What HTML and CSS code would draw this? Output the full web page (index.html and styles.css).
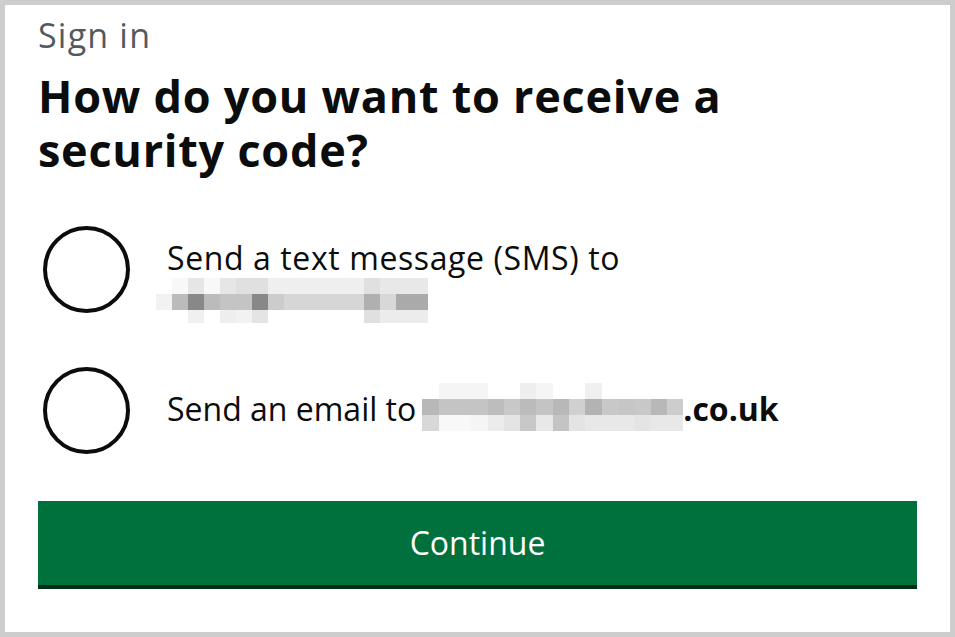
FILE: index.html
```html
<!DOCTYPE html>
<html lang="en">
<head>
<meta charset="utf-8">
<title>Sign in</title>
<link rel="stylesheet" href="styles.css">
</head>
<body>
<main class="page">
  <p class="caption">Sign in</p>
  <h1 class="heading">How do you want to receive a security code?</h1>
  <div class="radios">
    <div class="radio radio-sms">
      <span class="radio-circle"></span>
      <div class="radio-label label-sms">
        <div class="label-line">Send a text message (SMS) to</div>
        <div class="blur blur-phone" aria-hidden="true">
          <i></i><i class="cf8"></i><i class="ce6"></i><i class="cf8"></i><i class="ce6"></i><i class="ce0"></i><i class="ce0"></i><i class="cef"></i><i class="cef"></i><i class="cef"></i><i class="cef"></i><i class="cef"></i><i class="cef"></i><i class="ce0"></i><i class="ce8"></i><i class="ce8"></i><i class="ce8"></i>
          <i class="cf2"></i><i class="cbb"></i><i class="c88"></i><i class="cbb"></i><i class="cc4"></i><i class="cc4"></i><i class="c88"></i><i class="ccc"></i><i class="cd6"></i><i class="cd6"></i><i class="cd6"></i><i class="cd6"></i><i class="cd6"></i><i class="cb0"></i><i class="cd8"></i><i class="caa"></i><i class="caa"></i>
          <i></i><i></i><i class="cf0"></i><i></i><i class="cee"></i><i class="cf2"></i><i class="ce4"></i><i></i><i></i><i></i><i></i><i></i><i></i><i class="ce0"></i><i class="cec"></i><i class="cec"></i><i class="cec"></i>
        </div>
      </div>
    </div>
    <div class="radio radio-email">
      <span class="radio-circle"></span>
      <div class="radio-label label-email">
        <span class="email-text">Send an email to</span>
        <div class="blur blur-email" aria-hidden="true">
          <i></i><i class="cf5"></i><i class="cf5"></i><i class="cf5"></i><i></i><i></i><i class="cee"></i><i class="cf5"></i><i></i><i></i><i class="cf0"></i><i></i><i></i><i></i><i></i><i></i>
          <i class="cb8"></i><i class="cc4"></i><i class="cc4"></i><i class="cc4"></i><i class="cbd"></i><i class="cc8"></i><i class="cbb"></i><i class="cc4"></i><i class="cb8"></i><i class="cd0"></i><i class="cb3"></i><i class="cc8"></i><i class="cc6"></i><i class="cc8"></i><i class="cb8"></i><i class="ccd"></i>
          <i class="cd8"></i><i class="cf8"></i><i class="cf8"></i><i class="cf5"></i><i class="cec"></i><i class="ce4"></i><i class="cc8"></i><i class="ce8"></i><i class="cc4"></i><i class="ce4"></i><i class="ce8"></i><i class="ce8"></i><i class="ce8"></i><i class="ce4"></i><i class="ce8"></i><i class="ce8"></i>
        </div>
        <span class="email-domain">.co.uk</span>
      </div>
    </div>
  </div>
  <button class="button" type="button">Continue</button>
</main>
</body>
</html>
```
FILE: styles.css
```css
html, body {
  margin: 0;
  padding: 0;
  background: #ffffff;
}

.page {
  box-sizing: border-box;
  width: 955px;
  height: 637px;
  border: 5px solid #cdcdcd;
  padding: 10px 33px 0 33px;
  font-family: "Open Sans", "Liberation Sans", Arial, sans-serif;
  color: #0b0c0c;
  overflow: hidden;
}

.caption {
  margin: 0;
  font-size: 34px;
  line-height: 40px;
  letter-spacing: 1.2px;
  color: #505a5f;
}

.heading {
  margin: 14px 0 0;
  font-size: 45px;
  line-height: 54px;
  font-weight: 700;
  letter-spacing: 0.75px;
  width: 800px;
}

.radios {
  margin-top: 49px;
  display: flex;
  flex-direction: column;
  gap: 44px;
}

.radio {
  display: flex;
  align-items: flex-start;
}

.radio-circle {
  flex: none;
  box-sizing: border-box;
  width: 87px;
  height: 87px;
  margin-left: 5px;
  border: 4px solid #0b0c0c;
  border-radius: 50%;
}

.radio-label {
  margin-left: 37px;
  font-size: 32px;
  line-height: 40px;
}

.label-sms {
  padding-top: 12px;
}

.label-line {
  letter-spacing: 0.6px;
}

.label-email {
  padding-top: 22px;
  display: flex;
  align-items: flex-start;
}

.blur {
  display: grid;
}

.blur-phone {
  margin-left: -11px;
  width: 272px;
  grid-template-columns: repeat(17, 16px);
  grid-template-rows: 16px 16px 13px;
}

.blur-email {
  margin-left: 6px;
  margin-top: -6px;
  width: 261px;
  grid-template-columns: repeat(16, 1fr);
  grid-template-rows: 16px 16px 16px;
}

.email-domain {
  font-weight: 700;
}

.c88 { background: #888888; }
.caa { background: #aaaaaa; }
.cb0 { background: #b0b0b0; }
.cb3 { background: #b3b3b3; }
.cb8 { background: #b8b8b8; }
.cbb { background: #bbbbbb; }
.cbd { background: #bdbdbd; }
.cc4 { background: #c4c4c4; }
.cc6 { background: #c6c6c6; }
.cc8 { background: #c8c8c8; }
.ccc { background: #cccccc; }
.ccd { background: #cdcdcd; }
.cd0 { background: #d0d0d0; }
.cd6 { background: #d6d6d6; }
.cd8 { background: #d8d8d8; }
.ce0 { background: #e0e0e0; }
.ce4 { background: #e4e4e4; }
.ce6 { background: #e6e6e6; }
.ce8 { background: #e8e8e8; }
.cec { background: #ececec; }
.cee { background: #eeeeee; }
.cef { background: #efefef; }
.cf0 { background: #f0f0f0; }
.cf2 { background: #f2f2f2; }
.cf5 { background: #f5f5f5; }
.cf8 { background: #f8f8f8; }

.button {
  display: block;
  margin: 47px 0 0 0;
  width: 879px;
  height: 84px;
  padding: 0;
  border: 0;
  border-radius: 0;
  background: #00703c;
  box-shadow: 0 4px 0 #002d18;
  color: #ffffff;
  font-family: "Open Sans", "Liberation Sans", Arial, sans-serif;
  font-size: 32px;
  line-height: 84px;
  text-align: center;
}
```
